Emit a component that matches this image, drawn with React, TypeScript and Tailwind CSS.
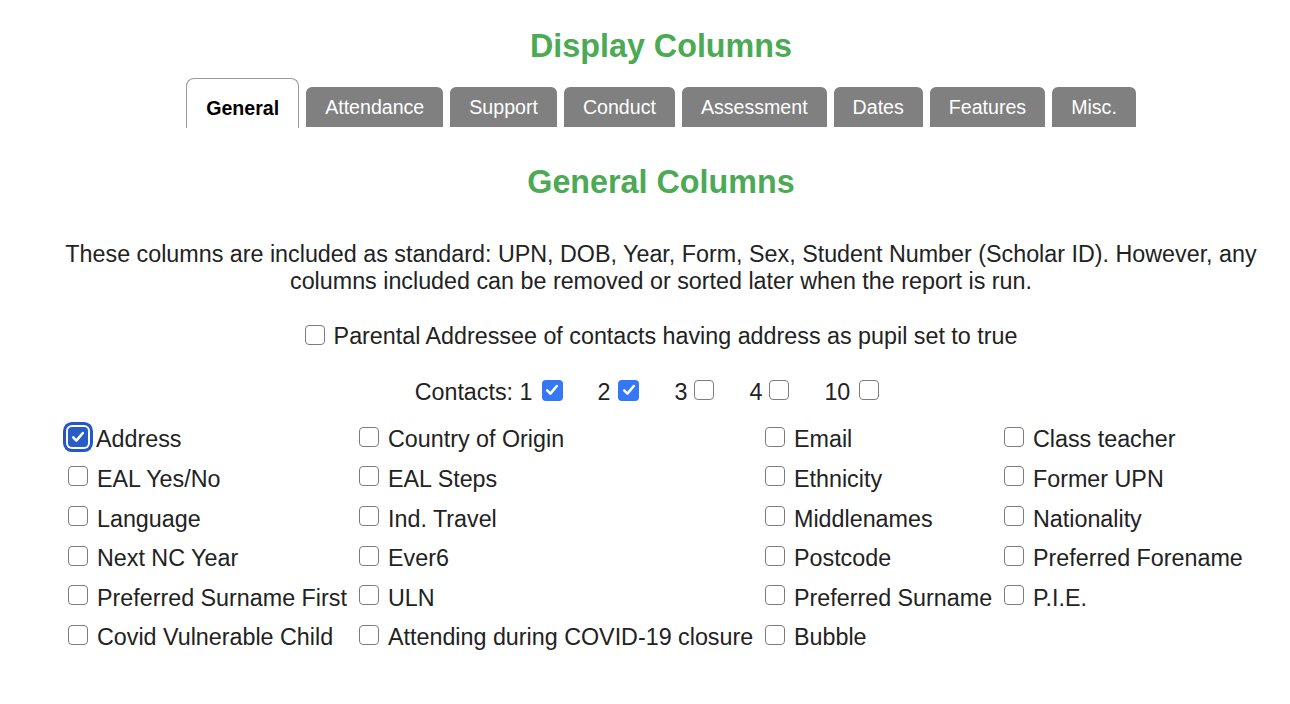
import React from "react";

const Check = () => (
  <svg viewBox="0 0 20 20" className="w-[16px] h-[16px]" fill="none">
    <path d="M4 10.5 L8 14.5 L16 5" stroke="white" strokeWidth="3.2" strokeLinecap="round" strokeLinejoin="round" />
  </svg>
);

function Box({ checked = false, focused = false }: { checked?: boolean; focused?: boolean }) {
  if (checked && focused) {
    return (
      <span className="block w-[20px] h-[20px] shrink-0 rounded-[4px] bg-[#2a5cc8] flex items-center justify-center shadow-[0_0_0_2px_white,0_0_0_5px_#2456c8]">
        <Check />
      </span>
    );
  }
  if (checked) {
    return (
      <span className="block w-[21px] h-[21px] shrink-0 rounded-[4px] bg-[#3478f6] flex items-center justify-center">
        <Check />
      </span>
    );
  }
  return <span className="block w-[20px] h-[20px] shrink-0 rounded-[4px] border border-[#7d7d7d] bg-white" />;
}

const tabs = ["Attendance", "Support", "Conduct", "Assessment", "Dates", "Features", "Misc."];

const rows: string[][] = [
  ["Address", "Country of Origin", "Email", "Class teacher"],
  ["EAL Yes/No", "EAL Steps", "Ethnicity", "Former UPN"],
  ["Language", "Ind. Travel", "Middlenames", "Nationality"],
  ["Next NC Year", "Ever6", "Postcode", "Preferred Forename"],
  ["Preferred Surname First", "ULN", "Preferred Surname", "P.I.E."],
  ["Covid Vulnerable Child", "Attending during COVID-19 closure", "Bubble", ""],
];

export default function App() {
  return (
    <div className="min-h-[704px] bg-white text-[#222] font-['Liberation_Sans',Arial,sans-serif]">
      <div className="pl-[62px] pr-[30px] flex flex-col items-center">
        <h1 className="pt-[28px] text-[32.3px] leading-[37px] font-bold text-[#4caa55]">Display Columns</h1>

        <div className="mt-[13px] flex items-end gap-[7px]">
          <div className="h-[50px] pt-[10px] px-[19px] flex items-center border border-b-0 border-[#9a9a9a] rounded-t-[8px] bg-white text-[19.6px] font-bold text-black">
            General
          </div>
          {tabs.map((t) => (
            <div
              key={t}
              className="h-[40px] mb-[1px] pt-[2px] px-[19px] flex items-center rounded-t-[6px] bg-[#808080] text-white text-[19.6px]"
            >
              {t}
            </div>
          ))}
        </div>

        <h2 className="mt-[36px] text-[32.3px] leading-[37px] font-bold text-[#4caa55]">General Columns</h2>

        <p className="mt-[40px] text-[23.3px] leading-[27px] text-center w-full whitespace-nowrap">
          These columns are included as standard: UPN, DOB, Year, Form, Sex, Student Number (Scholar ID). However, any
          <br />
          columns included can be removed or sorted later when the report is run.
        </p>

        <div className="mt-[28px] flex items-center text-[23.3px] leading-[27px]">
          <span className="mb-[4px] mr-[9px]">
            <Box />
          </span>
          <span>Parental Addressee of contacts having address as pupil set to true</span>
        </div>

        <div className="mt-[29px] mr-[28px] flex items-center text-[23.3px] leading-[27px]">
          <span>Contacts: 1</span>
          <span className="ml-[9px] mr-[35px] mb-[5px]"><Box checked /></span>
          <span>2</span>
          <span className="ml-[8px] mr-[35px] mb-[5px]"><Box checked /></span>
          <span>3</span>
          <span className="ml-[7px] mr-[35px] mb-[5px]"><Box /></span>
          <span>4</span>
          <span className="ml-[7px] mr-[35px] mb-[5px]"><Box /></span>
          <span>10</span>
          <span className="ml-[9px] mb-[5px]"><Box /></span>
        </div>
      </div>

      <div className="mt-[14px] ml-[62px] grid grid-cols-[291px_406px_239px_260px] auto-rows-[39.6px] text-[23.3px]">
        {rows.flatMap((r, ri) =>
          r.map((label, ci) =>
            label ? (
              <div key={`${ri}-${ci}`} className="flex items-center pl-[6px] whitespace-nowrap">
                <span className="mb-[6px] mr-[9px]">
                  <Box checked={ri === 0 && ci === 0} focused={ri === 0 && ci === 0} />
                </span>
                <span className={ri === 0 && ci === 0 ? "-ml-[1px]" : ""}>{label}</span>
              </div>
            ) : (
              <div key={`${ri}-${ci}`} />
            )
          )
        )}
      </div>
    </div>
  );
}
